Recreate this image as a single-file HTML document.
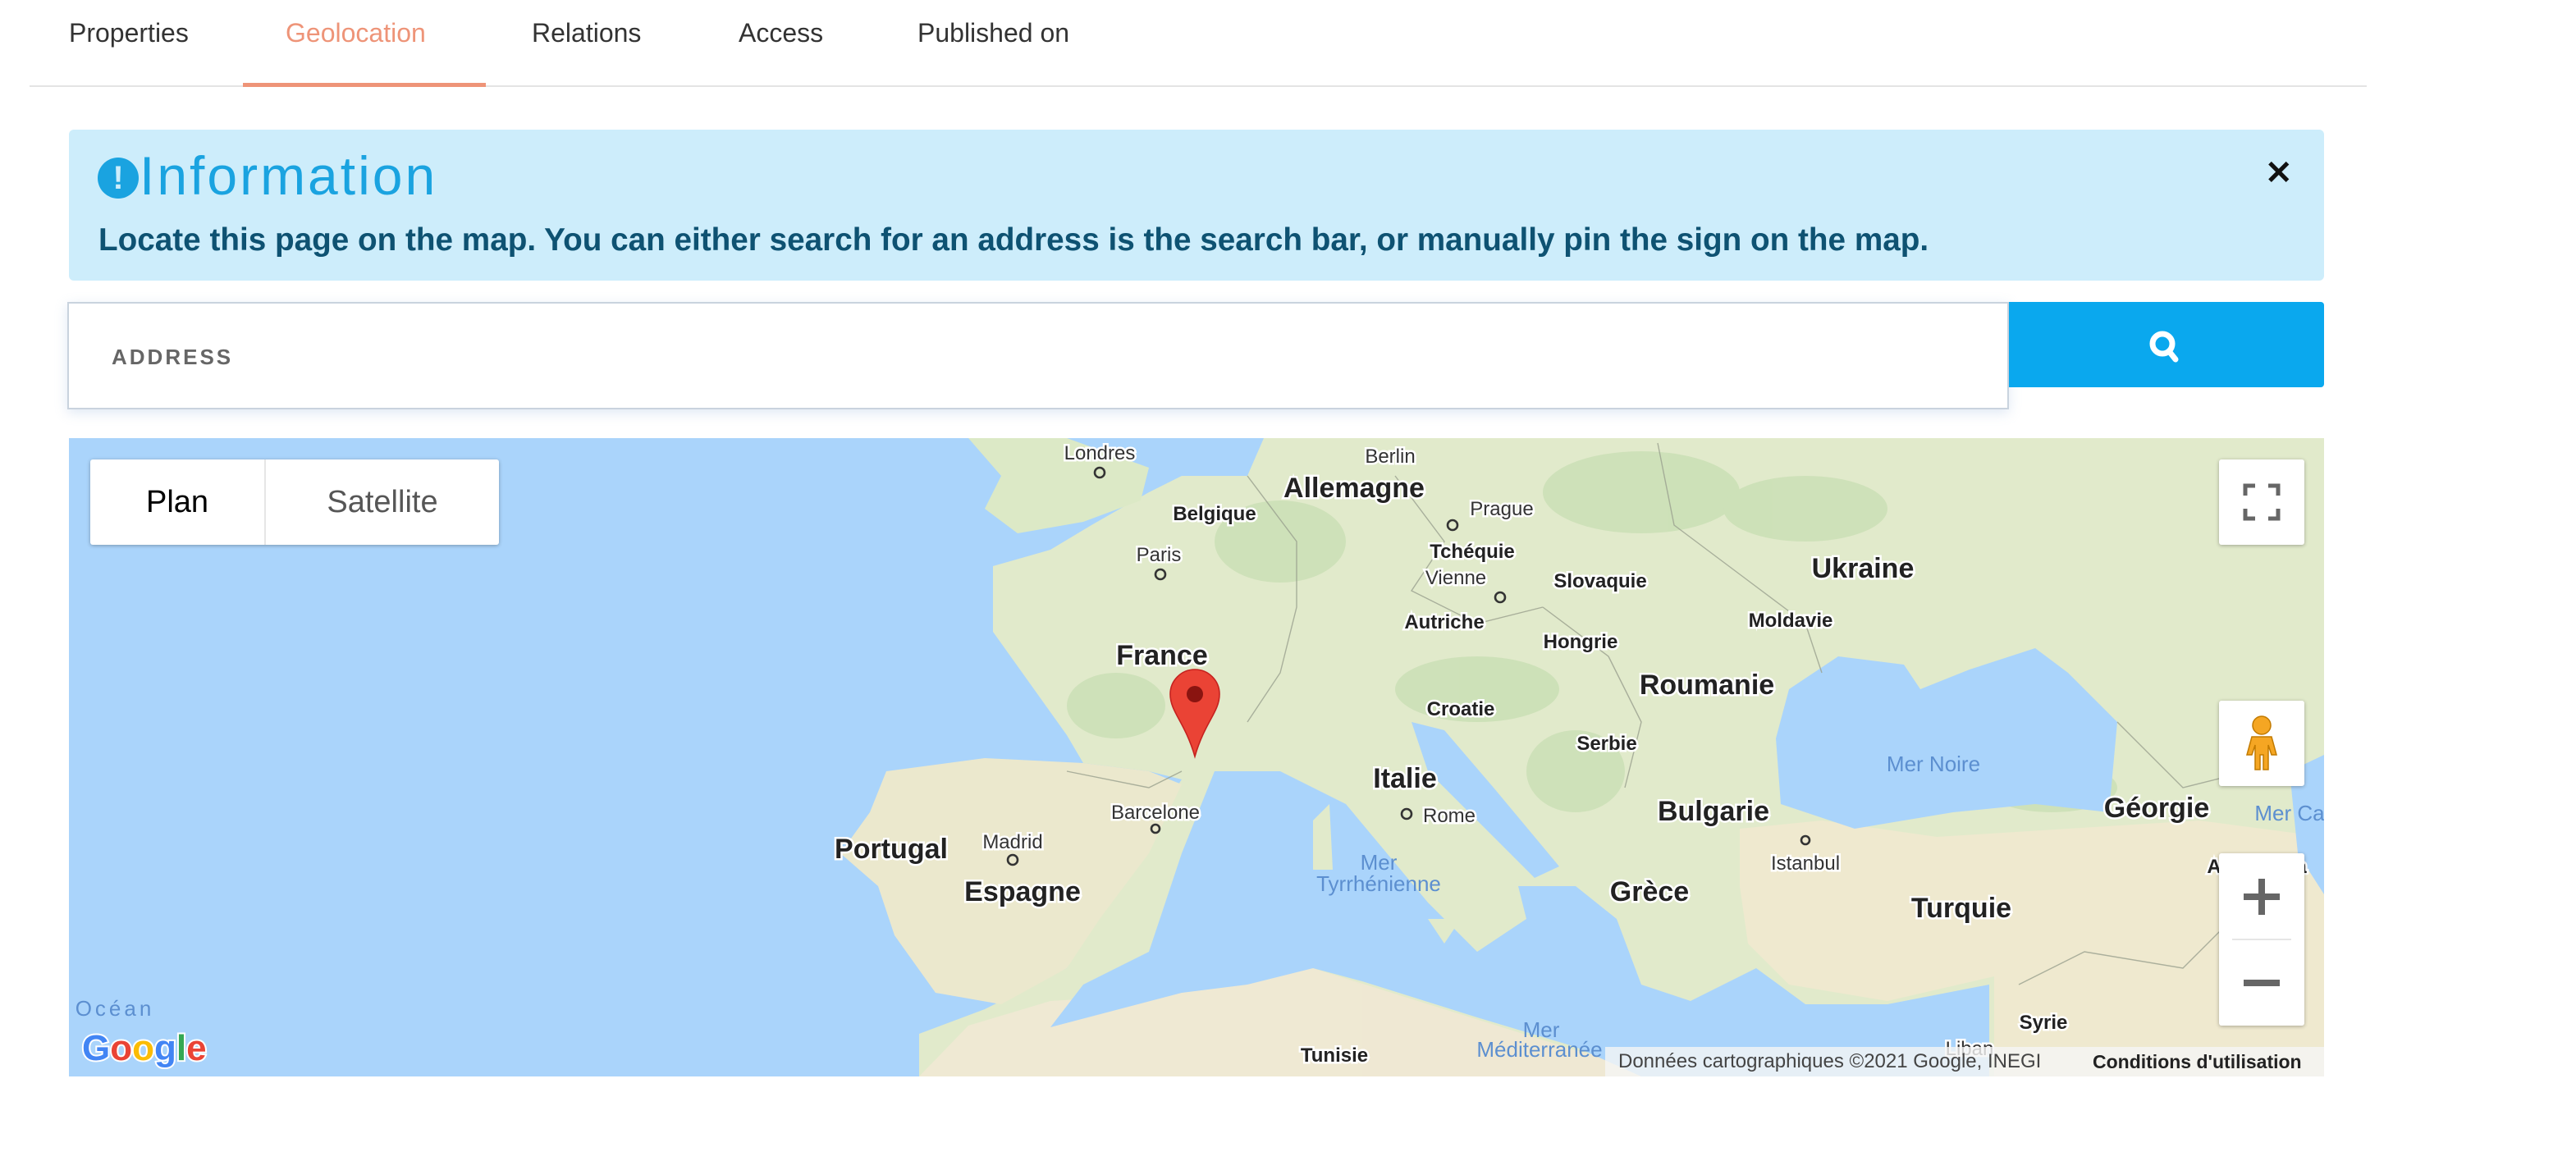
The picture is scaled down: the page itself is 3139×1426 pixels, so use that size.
<!DOCTYPE html>
<html><head><meta charset="utf-8"><style>
*{margin:0;padding:0;box-sizing:border-box}
body{width:3139px;height:1426px;background:#fff;font-family:"Liberation Sans",sans-serif;position:relative;overflow:hidden}
.tab{position:absolute;top:22px;font-size:32px;color:#333;letter-spacing:0px}
.abs{position:absolute}
</style></head><body>
<div class="tab" style="left:84px">Properties</div>
<div class="tab" style="left:348px;color:#ee9478">Geolocation</div>
<div class="tab" style="left:648px">Relations</div>
<div class="tab" style="left:900px">Access</div>
<div class="tab" style="left:1118px">Published on</div>
<div class="abs" style="left:36px;top:104px;width:2848px;height:2px;background:#e4e4e4"></div>
<div class="abs" style="left:296px;top:101px;width:296px;height:5px;background:#ee9478"></div>

<div class="abs" style="left:84px;top:158px;width:2748px;height:184px;background:#cdedfb;border-radius:6px"></div>
<div class="abs" style="left:119px;top:192px;width:50px;height:50px;border-radius:50%;background:#1aa3e0;color:#cdedfb;font-weight:bold;font-size:40px;line-height:50px;text-align:center">!</div>
<div class="abs" style="left:170px;top:176px;font-size:66px;color:#1aa3e0;font-weight:300;letter-spacing:3px">Information</div>
<div class="abs" style="left:120px;top:271px;font-size:38.7px;font-weight:bold;color:#0e5272;letter-spacing:0px;white-space:nowrap">Locate this page on the map. You can either search for an address is the search bar, or manually pin the sign on the map.</div>
<div class="abs" style="left:2760px;top:188px;font-size:40px;font-weight:bold;color:#111">✕</div>

<div class="abs" style="left:82px;top:368px;width:2366px;height:131px;background:#fff;border:2px solid #c9d3de;box-shadow:0 4px 14px rgba(150,180,220,.3)"></div>
<div class="abs" style="left:136px;top:420px;font-size:26px;font-weight:bold;color:#666;letter-spacing:3px">ADDRESS</div>
<div class="abs" style="left:2448px;top:368px;width:384px;height:104px;background:#0aa8ee;border-radius:0 4px 4px 0"></div>
<svg class="abs" style="left:2618px;top:402px" width="38" height="42" viewBox="0 0 38 42"><circle cx="17" cy="17" r="12" fill="none" stroke="#fff" stroke-width="7"/><path d="M25 26 L33 36" stroke="#fff" stroke-width="7" stroke-linecap="round"/></svg>

<svg class="abs" style="left:84px;top:534px" width="2748" height="778" viewBox="42 267 1374 389">
<rect x="42" y="267" width="1374" height="389" fill="#aad4fb"/>
<path d="M600,267 L1416,267 L1416,656 L560,656 L560,630 L600,615 L650,590 L690,520 L720,475 L700,470 L660,465 L650,448 L630,420 L605,385 L605,345 L640,335 L665,320 L700,300 L720,290 L760,290 L770,267 Z" fill="#e1eacb"/>
<path d="M540,470 L600,462 L660,465 L700,470 L720,478 L700,520 L670,560 L650,590 L610,612 L570,605 L545,570 L535,540 L512,520 L530,495 Z" fill="#ebe8cd"/>
<path d="M590,267 L650,267 L700,285 L695,305 L660,318 L620,325 L600,310 L610,290 Z" fill="#dce9c6"/>
<path d="M1060,505 L1110,500 L1180,510 L1260,505 L1340,500 L1416,510 L1416,656 L1215,656 L1215,595 L1150,610 L1090,600 L1065,575 L1060,540 Z" fill="#efe9cf"/>
<path d="M560,656 L590,625 L640,610 L720,605 L800,590 L830,600 L830,656 Z" fill="#efe9d3"/>
<path d="M800,590 L960,640 L1000,650 L1000,656 L830,656 L830,600 Z" fill="#efe8d3"/>
<g fill="#c9dfb4" opacity=".8">
<ellipse cx="780" cy="330" rx="40" ry="25"/><ellipse cx="900" cy="420" rx="50" ry="20"/><ellipse cx="1000" cy="300" rx="60" ry="25"/><ellipse cx="1100" cy="310" rx="50" ry="20"/><ellipse cx="960" cy="470" rx="30" ry="25"/><ellipse cx="1250" cy="480" rx="40" ry="15"/><ellipse cx="680" cy="430" rx="30" ry="20"/></g>
<path d="M640,626 L660,600 L700,580 L720,520 L740,470 L780,470 L820,490 L845,520 L870,550 L900,580 L930,560 L925,540 L960,540 L985,560 L1000,600 L1030,610 L1070,590 L1100,612 L1150,612 L1212,600 L1212,656 L1000,656 L960,638 L900,620 L830,598 L800,590 L760,600 L720,605 Z" fill="#aad4fb"/>
<path d="M860,440 L880,445 L910,480 L950,528 L935,535 L900,500 L870,470 Z" fill="#aad4fb"/>
<path d="M1090,420 L1120,400 L1160,405 L1170,420 L1200,408 L1240,395 L1260,410 L1290,440 L1285,495 L1240,490 L1190,495 L1130,505 L1085,490 L1082,450 Z" fill="#aad4fb"/>
<path d="M1395,470 L1416,460 L1416,545 L1400,520 Z" fill="#aad4fb"/>
<path d="M800,500 L810,490 L812,530 L800,530 Z M870,560 L890,560 L880,575 Z" fill="#e1eacb"/>
<g fill="none" stroke="#9aa08e" stroke-width=".7" opacity=".8">
<path d="M760,290 L790,330 L790,370 L780,410 L760,440"/><path d="M850,290 L880,330 L860,360 L900,380 L940,370"/><path d="M940,370 L980,400 L1000,440 L990,480"/><path d="M1010,270 L1020,320 L1060,350 L1100,380 L1110,410"/><path d="M650,470 L700,480 L720,470"/><path d="M1290,440 L1330,480 L1370,470"/><path d="M1230,600 L1270,580 L1330,590 L1360,560"/></g>
<g font-family="Liberation Sans,sans-serif" text-anchor="middle" stroke="#fff" stroke-width="2.5" paint-order="stroke" fill="#333">
<g font-size="12"><text x="670" y="280">Londres</text><text x="847" y="282">Berlin</text><text x="915" y="314">Prague</text><text x="706" y="342">Paris</text><text x="887" y="356">Vienne</text><text x="704" y="499">Barcelone</text><text x="883" y="501">Rome</text><text x="617" y="517">Madrid</text><text x="1100" y="530">Istanbul</text><text x="1200" y="643">Liban</text></g>
<g font-size="12" font-weight="bold" fill="#222"><text x="740" y="317">Belgique</text><text x="897" y="340">Tchéquie</text><text x="975" y="358">Slovaquie</text><text x="880" y="383">Autriche</text><text x="1091" y="382">Moldavie</text><text x="963" y="395">Hongrie</text><text x="890" y="436">Croatie</text><text x="979" y="457">Serbie</text><text x="1245" y="627">Syrie</text><text x="813" y="647">Tunisie</text><text x="1375" y="532">Azerbaïdja</text></g>
<g font-size="17" font-weight="bold" fill="#222"><text x="825" y="303">Allemagne</text><text x="1135" y="352">Ukraine</text><text x="708" y="405">France</text><text x="1040" y="423">Roumanie</text><text x="856" y="480">Italie</text><text x="1314" y="498">Géorgie</text><text x="1044" y="500">Bulgarie</text><text x="543" y="523">Portugal</text><text x="623" y="549">Espagne</text><text x="1005" y="549">Grèce</text><text x="1195" y="559">Turquie</text></g>
<g font-size="13" fill="#5c8fd0" stroke="none"><text x="1178" y="470">Mer Noire</text><text x="1395" y="500">Mer Ca</text><text x="840" y="530">Mer</text><text x="840" y="543">Tyrrhénienne</text><text x="939" y="632">Mer</text><text x="938" y="644">Méditerranée</text><text x="70" y="619" letter-spacing="2">Océan</text></g>
</g>
<g fill="none" stroke="#333" stroke-width="1.3"><circle cx="670" cy="288" r="3"/><circle cx="707" cy="350" r="3"/><circle cx="885" cy="320" r="3"/><circle cx="914" cy="364" r="3"/><circle cx="857" cy="496" r="3"/><circle cx="617" cy="524" r="3"/><circle cx="704" cy="505" r="2.5"/><circle cx="1100" cy="512" r="2.5"/></g>
<path d="M728,461 C722,440 713,434 713,423 A15,15 0 0 1 743,423 C743,434 734,440 728,461 Z" fill="#ea4335" stroke="#c5221f" stroke-width=".8"/>
<circle cx="728" cy="423" r="5" fill="#8a1410"/>
<text x="50" y="646" font-family="Liberation Sans,sans-serif" font-size="22" font-weight="bold" stroke="#fff" stroke-width="2" paint-order="stroke"><tspan fill="#4285f4">G</tspan><tspan fill="#ea4335">o</tspan><tspan fill="#fbbc05">o</tspan><tspan fill="#4285f4">g</tspan><tspan fill="#34a853">l</tspan><tspan fill="#ea4335">e</tspan></text>
</svg>

<div class="abs" style="left:110px;top:560px;width:498px;height:104px;background:#fff;border-radius:3px;box-shadow:0 1px 5px rgba(0,0,0,.3);font-family:'Liberation Sans',sans-serif;font-size:38px">
<div class="abs" style="left:0;top:0;width:212px;height:104px;line-height:104px;text-align:center;color:#000">Plan</div>
<div class="abs" style="left:212px;top:0;width:2px;height:104px;background:#e6e6e6"></div>
<div class="abs" style="left:214px;top:0;width:284px;height:104px;line-height:104px;text-align:center;color:#565656">Satellite</div>
</div>
<div class="abs" style="left:2704px;top:560px;width:104px;height:104px;background:#fff;border-radius:3px;box-shadow:0 1px 5px rgba(0,0,0,.3)">
<svg width="104" height="104"><path d="M32 44V32H44M60 32H72V44M72 60V72H60M44 72H32V60" fill="none" stroke="#666" stroke-width="5"/></svg></div>
<div class="abs" style="left:2704px;top:854px;width:104px;height:104px;background:#fff;border-radius:3px;box-shadow:0 1px 5px rgba(0,0,0,.3)">
<svg width="104" height="104"><circle cx="52" cy="30" r="11" fill="#f5a623" stroke="#c27a00" stroke-width="1.5"/><path d="M40 44 L64 44 L70 66 L64 66 L60 54 L60 84 L54 84 L54 66 L50 66 L50 84 L44 84 L44 54 L40 66 L34 66 Z" fill="#f5a623" stroke="#c27a00" stroke-width="1.5"/></svg></div>
<div class="abs" style="left:2704px;top:1040px;width:104px;height:210px;background:#fff;border-radius:3px;box-shadow:0 1px 5px rgba(0,0,0,.3)">
<div class="abs" style="left:30px;top:49px;width:44px;height:8px;background:#666"></div>
<div class="abs" style="left:48px;top:31px;width:8px;height:44px;background:#666"></div>
<div class="abs" style="left:16px;top:104px;width:72px;height:2px;background:#e6e6e6"></div>
<div class="abs" style="left:30px;top:154px;width:44px;height:8px;background:#666"></div>
</div>
<div class="abs" style="left:1956px;top:1276px;width:876px;height:36px;background:rgba(245,245,245,.8);font-size:24px;line-height:36px;color:#444;white-space:nowrap">
<span style="position:absolute;left:16px">Données cartographiques ©2021 Google, INEGI</span>
<span style="position:absolute;left:594px;font-weight:bold;color:#222;font-size:23px">Conditions d'utilisation</span></div>
</body></html>
